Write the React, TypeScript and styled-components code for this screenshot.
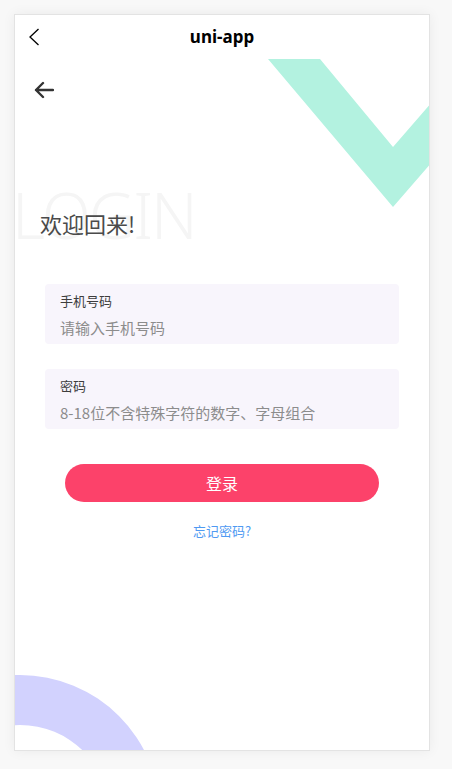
import React from "react";
import styled, { createGlobalStyle } from "styled-components";

const GlobalStyle = createGlobalStyle`
  html, body {
    margin: 0;
    padding: 0;
    background: #f8f8f8;
  }
  body {
    font-family: "Noto Sans", "Noto Sans CJK SC", sans-serif;
  }
  * { box-sizing: border-box; }
`;

const Page = styled.div`
  padding: 14px 0 0 14px;
  width: 452px;
  height: 769px;
`;

const Frame = styled.div`
  width: 416px;
  height: 737px;
  background: #ffffff;
  border: 1px solid #e3e3e3;
  box-shadow: 0 0 12px rgba(0, 0, 0, 0.06);
  display: flex;
  flex-direction: column;
  overflow: hidden;
`;

const NavBar = styled.div`
  height: 44px;
  flex: 0 0 44px;
  display: grid;
  grid-template-columns: 44px 1fr 44px;
  align-items: center;
`;

const NavBack = styled.div`
  display: flex;
  align-items: center;
  justify-content: flex-start;
  padding-left: 13px;
  height: 44px;
`;

const NavTitle = styled.div`
  text-align: center;
  font-family: "Noto Sans", "Noto Sans CJK SC", sans-serif;
  font-weight: 700;
  font-size: 17px;
  color: #000;
  line-height: 44px;
`;

const Content = styled.div`
  position: relative;
  flex: 1;
  overflow: hidden;
  display: flex;
  flex-direction: column;
`;

const Deco = styled.svg`
  position: absolute;
  left: 0;
  top: 0;
  pointer-events: none;
`;

const BgWord = styled.div`
  position: absolute;
  left: -3px;
  top: 116px;
  font-family: "Noto Sans", sans-serif;
  font-weight: 300;
  font-size: 64px;
  line-height: 80px;
  color: #f5f5f5;
  letter-spacing: -2px;
  pointer-events: none;
`;

const Inner = styled.div`
  position: relative;
  display: flex;
  flex-direction: column;
  padding: 20px 0 0 0;
`;

const BackArrow = styled.div`
  margin-left: 19px;
  width: 22px;
  height: 22px;
  display: flex;
  align-items: center;
`;

const Title = styled.div`
  margin: 107px 0 0 25px;
  font-family: "Noto Sans CJK SC", sans-serif;
  font-size: 22px;
  line-height: 30px;
  color: #4a4a4a;
`;

const Form = styled.div`
  display: flex;
  flex-direction: column;
  gap: 25px;
  padding: 0 30px;
  margin-top: 46px;
`;

const Field = styled.div`
  height: 60px;
  background: #f8f5fc;
  border-radius: 4px;
  padding: 7px 15px 0 15px;
  display: flex;
  flex-direction: column;
`;

const Label = styled.div`
  font-family: "Noto Sans CJK SC", sans-serif;
  font-size: 13px;
  line-height: 20px;
  color: #3d3d3d;
`;

const Input = styled.input`
  margin-top: 1px;
  height: 30px;
  border: none;
  outline: none;
  background: transparent;
  padding: 0;
  font-family: "Noto Sans CJK SC", sans-serif;
  font-size: 15px;
  color: #333;
  &::placeholder {
    color: #8c8c8c;
  }
`;

const SubmitButton = styled.button`
  margin: 35px 50px 0 50px;
  height: 38px;
  border: none;
  border-radius: 19px;
  background: #fc426a;
  color: #fff;
  font-family: "Noto Sans CJK SC", sans-serif;
  font-size: 16px;
`;

const Forgot = styled.div`
  margin-top: 19px;
  text-align: center;
  font-family: "Noto Sans CJK SC", sans-serif;
  font-size: 13px;
  line-height: 20px;
  color: #4f9af2;
`;

export default function App() {
  return (
    <>
      <GlobalStyle />
      <Page>
        <Frame>
          <NavBar>
            <NavBack>
              <svg width="12" height="18" viewBox="0 0 12 18">
                <path d="M10.5 1 L2 9 L10.5 17" fill="none" stroke="#000" strokeWidth="1.3" />
              </svg>
            </NavBack>
            <NavTitle>uni-app</NavTitle>
            <div />
          </NavBar>
          <Content>
            <Deco width="414" height="691" viewBox="0 0 414 691">
              <polygon points="253,0 305,0 378,88 468,-16 468,44 378,148" fill="#b3f2e0" />
              <path
                d="M -135 756 A 140 140 0 0 1 145 756 L 95 756 A 90 90 0 0 0 -85 756 Z"
                fill="#d2d2fe"
              />
            </Deco>
            <BgWord>LOGIN</BgWord>
            <Inner>
              <BackArrow>
                <svg width="20" height="18" viewBox="0 0 20 18">
                  <path d="M19 9 H2 M9 2 L2 9 L9 16" fill="none" stroke="#333" strokeWidth="2.4" strokeLinecap="round" strokeLinejoin="round" />
                </svg>
              </BackArrow>
              <Title>欢迎回来!</Title>
              <Form>
                <Field>
                  <Label>手机号码</Label>
                  <Input placeholder="请输入手机号码" />
                </Field>
                <Field>
                  <Label>密码</Label>
                  <Input type="password" placeholder="8-18位不含特殊字符的数字、字母组合" />
                </Field>
              </Form>
              <SubmitButton>登录</SubmitButton>
              <Forgot>忘记密码?</Forgot>
            </Inner>
          </Content>
        </Frame>
      </Page>
    </>
  );
}
